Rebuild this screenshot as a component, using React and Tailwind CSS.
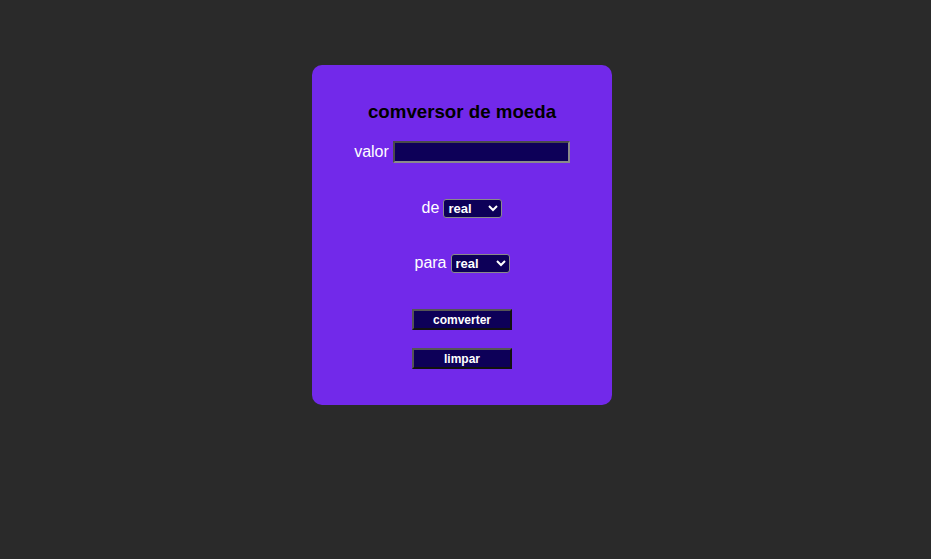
export default function App() {
  return (
    <div className="min-h-[559px] w-full bg-[#2a2a2a] pt-[65px] font-['Liberation_Sans',Arial,sans-serif]">
      <div className="ml-[312px] flex h-[340px] w-[300px] flex-col items-center rounded-[10px] bg-[#7229ea] pt-[36px]">
        <h1 className="text-[18.72px] font-bold leading-[22px] text-black">comversor de moeda</h1>

        <div className="mt-[18px] flex h-[22px] items-center gap-[4px] text-[16px] leading-[22px] text-white">
          <label>valor</label>
          <input
            type="text"
            className="h-[22px] w-[177px] border-2 border-t-[#4a4a4a] border-l-[#4a4a4a] border-b-[#8a8a8a] border-r-[#8a8a8a] bg-[#0d0058] px-1 text-[13px] text-white outline-none"
          />
        </div>

        <div className="mt-[35px] flex h-[20px] items-center gap-[4px] text-[16px] leading-[20px] text-white">
          <label>de</label>
          <select className="h-[19px] w-[59px] rounded-[3px] border border-[#8a8a8a] bg-[#0d0058] pl-0 text-[13px] font-bold leading-none text-white">
            <option>real</option>
            <option>dolar</option>
            <option>euro</option>
          </select>
        </div>

        <div className="mt-[35px] flex h-[20px] items-center gap-[4px] text-[16px] leading-[20px] text-white">
          <label>para</label>
          <select className="h-[19px] w-[59px] rounded-[3px] border border-[#8a8a8a] bg-[#0d0058] pl-0 text-[13px] font-bold leading-none text-white">
            <option>real</option>
            <option>dolar</option>
            <option>euro</option>
          </select>
        </div>

        <button className="mt-[36px] h-[21px] w-[100px] border-2 border-t-[#555] border-l-[#555] border-b-[#111] border-r-[#111] bg-[#0d0058] text-[12px] font-bold leading-none text-white">
          comverter
        </button>
        <button className="mt-[18px] h-[21px] w-[100px] border-2 border-t-[#555] border-l-[#555] border-b-[#111] border-r-[#111] bg-[#0d0058] text-[12px] font-bold leading-none text-white">
          limpar
        </button>
      </div>
    </div>
  );
}
